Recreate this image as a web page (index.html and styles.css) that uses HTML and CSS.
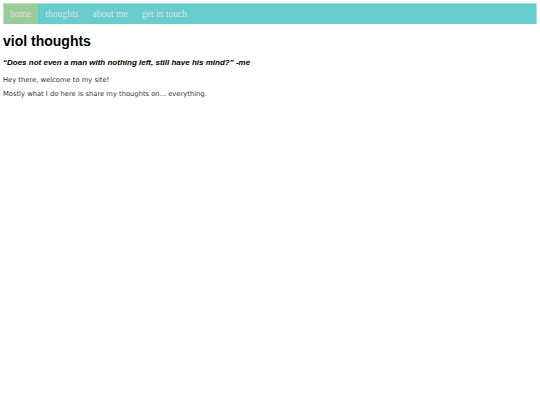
FILE: index.html
```html
<!DOCTYPE html>
<html>
<head>
<meta charset="utf-8">
<link rel="stylesheet" href="styles.css">
</head>
<body>
<nav class="nav">
  <a class="nav-item active" href="#">home</a>
  <a class="nav-item" href="#">thoughts</a>
  <a class="nav-item" href="#">about me</a>
  <a class="nav-item" href="#">get in touch</a>
</nav>
<h1 class="title">viol thoughts</h1>
<p class="quote">“Does not even a man with nothing left, still have his mind?” -me</p>
<p class="text first">Hey there, welcome to my site!</p>
<p class="text">Mostly what I do here is share my thoughts on... everything.</p>
</body>
</html>
```
FILE: styles.css
```css
body {
  margin: 3px;
  background: #fff;
}
.nav {
  display: flex;
  background: #66cccc;
  box-shadow: inset 1px 1px 0 #a8e0e0, inset -1px 0 0 #a8e0e0;
  height: 21px;
}
.nav-item {
  display: flex;
  align-items: center;
  padding: 0 7px;
  font-family: "Liberation Serif", serif;
  font-size: 9.6px;
  color: #e0e0e0;
  text-decoration: none;
}
.nav-item.active {
  background: #99cc99;
  box-shadow: inset 1px 1px 0 #c0e0c0;
}
.title {
  font-family: "Liberation Sans", Arial, sans-serif;
  font-size: 14px;
  line-height: 16px;
  font-weight: bold;
  margin: 9px 0 0 0;
  color: #000;
}
.quote {
  font-family: "Liberation Sans", Arial, sans-serif;
  font-size: 8px;
  line-height: 10px;
  font-weight: bold;
  font-style: italic;
  margin: 9px 0 0 0;
  color: #000;
}
.text {
  font-family: "DejaVu Sans", sans-serif;
  font-size: 6.75px;
  line-height: 8px;
  margin: 6px 0 0 0;
  color: #333;
}
.text.first {
  margin-top: 8px;
}
```
